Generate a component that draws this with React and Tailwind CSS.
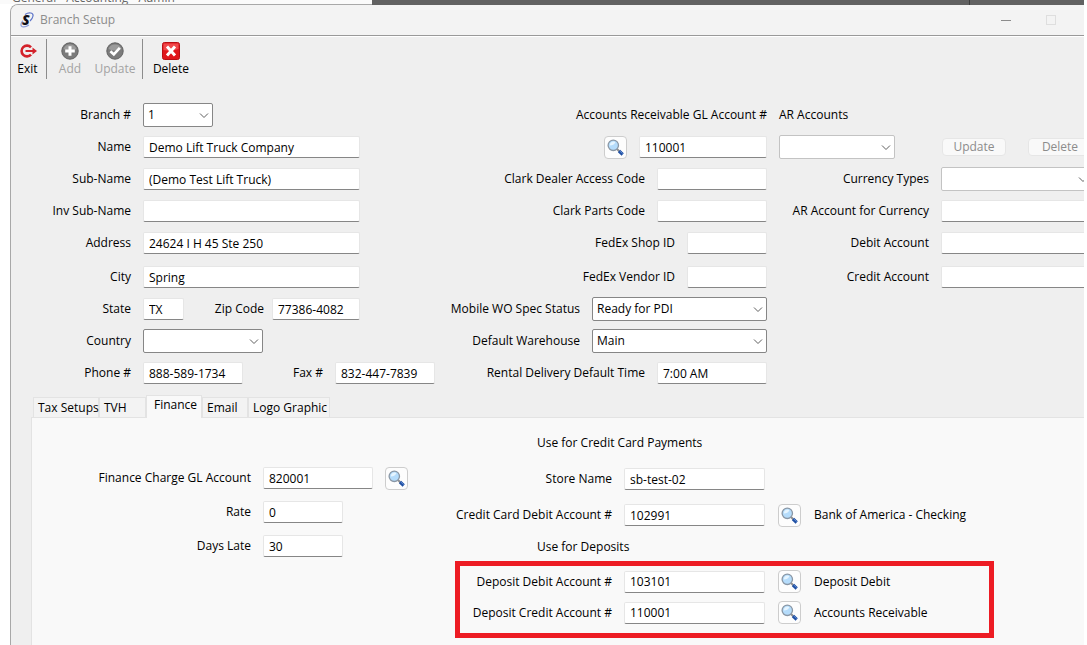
import clsx from 'clsx';

const Chevron = () => (
  <svg
    className="absolute right-1 top-1/2 -translate-y-1/2 pointer-events-none"
    width="10"
    height="10"
    viewBox="0 0 10 10"
    fill="none"
    stroke="#5f5f5f"
  >
    <path d="M1 3.5 L5 7.5 L9 3.5" />
  </svg>
);

const Label = ({ htmlFor, className, children }) => (
  <label htmlFor={htmlFor} className={clsx('flex shrink-0 justify-end whitespace-nowrap', className)}>
    {children}
  </label>
);

const TextBox = ({ id, value = '', className }) => (
  <input
    id={id}
    type="text"
    defaultValue={value}
    className={clsx(
      'h-[22px] shrink-0 rounded-xs border border-[#e6e6e6] border-b-[#868686] bg-white px-[5px] outline-none',
      className
    )}
  />
);

const DropDown = ({ id, value = '', className, muted }) => (
  <div className={clsx('relative shrink-0', className)}>
    <select
      id={id}
      defaultValue={value}
      className={clsx(
        'block h-6 w-full appearance-none rounded-xs border bg-white pl-1 pr-5 outline-none',
        muted ? 'border-[#c3c3c3]' : 'border-[#868686]'
      )}
    >
      <option value={value}>{value}</option>
    </select>
    <Chevron />
  </div>
);

const SearchButton = ({ label }) => (
  <button
    type="button"
    aria-label={label}
    className="flex h-[23px] w-[23px] shrink-0 items-center justify-center rounded border border-[#cdcdcd] bg-[#fdfdfd]"
  >
    <svg width="17" height="17" viewBox="0 0 17 17" fill="none">
      <path d="M10 10 L12.5 12.5" stroke="#8d8d8d" strokeWidth="2" />
      <path d="M12 12 L15.7 15.5" stroke="#1f4fa3" strokeWidth="3.2" />
      <path d="M12.6 11.8 L15.6 14.6" stroke="#6f9be0" strokeWidth="0.8" />
      <circle cx="6.3" cy="6.3" r="5.2" fill="#b5dcfb" stroke="#8a97a5" strokeWidth="1.3" />
      <path d="M2.8 6.4 A3.6 3.6 0 0 1 8.4 3.2 Q6.8 6.4 2.8 6.4" fill="#e6f5ff" />
    </svg>
  </button>
);

const Row = ({ className, children }) => (
  <div className={clsx('flex h-8 items-center gap-3', className)}>{children}</div>
);

const ExitIcon = () => (
  <svg width="20" height="18" viewBox="0 0 20 18" fill="none" stroke="#d3222a">
    <path d="M13 5.4 A5.4 5.4 0 1 0 13 12.6" strokeWidth="2.6" />
    <path d="M7.5 9 H16" strokeWidth="2" />
    <path d="M14.5 5.4 L19 9 L14.5 12.6 Z" fill="#d3222a" stroke="none" />
  </svg>
);

const AddIcon = () => (
  <svg width="18" height="18" viewBox="0 0 18 18">
    <circle cx="9" cy="9" r="8.2" fill="#7b7b7b" stroke="#626262" />
    <path d="M2.5 7 A7 7 0 0 1 15.5 7 Q9 10 2.5 7" fill="#9b9b9b" />
    <path d="M9 4.2 V13.8 M4.2 9 H13.8" stroke="#fff" strokeWidth="3" />
  </svg>
);

const UpdateIcon = () => (
  <svg width="18" height="18" viewBox="0 0 18 18">
    <circle cx="9" cy="9" r="8.2" fill="#7b7b7b" stroke="#626262" />
    <path d="M2.5 7 A7 7 0 0 1 15.5 7 Q9 10 2.5 7" fill="#9b9b9b" />
    <path d="M4.4 9.2 L7.8 12.4 L13.8 5.8" fill="none" stroke="#fff" strokeWidth="2.6" />
  </svg>
);

const DeleteIcon = () => (
  <svg width="18" height="18" viewBox="0 0 18 18">
    <rect x="0.5" y="0.5" width="17" height="17" rx="2" fill="#e0161b" stroke="#b80f14" />
    <path d="M1.5 1.5 H16.5 V7 Q9 10 1.5 8 Z" fill="#f0484a" />
    <path d="M5 4.6 L13 13.4 M13 4.6 L5 13.4" stroke="#fff" strokeWidth="3" />
  </svg>
);

const ToolButton = ({ icon, label, disabled, className }) => (
  <button
    type="button"
    disabled={disabled}
    className={clsx(
      'flex shrink-0 flex-col items-center pt-[3px]',
      disabled ? 'text-[#a3a3a3]' : 'text-black',
      className
    )}
  >
    {icon}
    <span className="leading-[18px]">{label}</span>
  </button>
);

const Logo = () => (
  <svg width="14" height="16" viewBox="0 0 14 16">
    <path d="M5 2.5 C9 0 13.5 0.5 13 4 C12.7 6 11.5 7.5 10 9" fill="none" stroke="#5f76c9" strokeWidth="1.2" />
    <path d="M9 13 C5 15.8 0.5 15.5 1 12 C1.3 10.5 2 9.5 3 8.6" fill="none" stroke="#8ea0dc" strokeWidth="1.2" />
    <text x="2" y="13" fontSize="14" fontWeight="800" fontStyle="italic" fill="#101018">S</text>
  </svg>
);

const tabs = [
  { name: 'Tax Setups', width: 'w-[66px]' },
  { name: 'TVH', width: 'w-[47px]' },
  { name: 'Finance', width: 'w-14' },
  { name: 'Email', width: 'w-[46px]' },
  { name: 'Logo Graphic', width: 'w-[82px]' },
];

const TabBar = ({ active }) => (
  <div role="tablist" className="flex h-[23px] items-end pl-[22px]">
    {tabs.map((tab) => (
      <button
        key={tab.name}
        type="button"
        role="tab"
        aria-selected={tab.name === active}
        className={clsx(
          'shrink-0 whitespace-nowrap border border-b-0 border-[#e3e3e3] text-left',
          tab.width,
          tab.name === active
            ? 'relative -mb-px h-[23px] bg-[#f9f9f9] pl-[7px] pb-1'
            : 'h-5 bg-[#f3f3f3] pl-1'
        )}
      >
        {tab.name}
      </button>
    ))}
  </div>
);

const AddressColumn = () => (
  <div className="flex w-[440px] shrink-0 flex-col gap-0.5">
    <div>
      <Row>
        <Label htmlFor="branch" className="w-30">Branch #</Label>
        <DropDown id="branch" value="1" className="w-[70px]" />
      </Row>
      <Row>
        <Label htmlFor="name" className="w-30">Name</Label>
        <TextBox id="name" value="Demo Lift Truck Company" className="w-[217px]" />
      </Row>
      <Row>
        <Label htmlFor="subname" className="w-30">Sub-Name</Label>
        <TextBox id="subname" value="(Demo Test Lift Truck)" className="w-[217px]" />
      </Row>
      <Row>
        <Label htmlFor="invname" className="w-30">Inv Sub-Name</Label>
        <TextBox id="invname" className="w-[217px]" />
      </Row>
      <Row>
        <Label htmlFor="address" className="w-30">Address</Label>
        <TextBox id="address" value="24624 I H 45 Ste 250" className="w-[217px]" />
      </Row>
    </div>
    <div>
      <Row>
        <Label htmlFor="city" className="w-30">City</Label>
        <TextBox id="city" value="Spring" className="w-[217px]" />
      </Row>
      <Row>
        <Label htmlFor="state" className="w-30">State</Label>
        <TextBox id="state" value="TX" className="w-[41px]" />
        <div className="flex items-center gap-2">
          <Label htmlFor="zip" className="w-[68px]">Zip Code</Label>
          <TextBox id="zip" value="77386-4082" className="w-[88px]" />
        </div>
      </Row>
      <Row>
        <Label htmlFor="country" className="w-30">Country</Label>
        <DropDown id="country" className="w-30" />
      </Row>
      <Row>
        <Label htmlFor="phone" className="w-30">Phone #</Label>
        <TextBox id="phone" value="888-589-1734" className="w-[100px]" />
        <Label htmlFor="fax" className="w-[68px]">Fax #</Label>
        <TextBox id="fax" value="832-447-7839" className="w-[100px]" />
      </Row>
    </div>
  </div>
);

const AccountColumn = () => (
  <div className="flex w-[316px] shrink-0 flex-col gap-0.5">
    <div>
      <Row className="justify-end">
        <Label htmlFor="argl">Accounts Receivable GL Account #</Label>
      </Row>
      <Row className="justify-end">
        <SearchButton label="Find receivable account" />
        <TextBox id="argl" value="110001" className="w-32" />
      </Row>
      <Row className="justify-end">
        <Label htmlFor="clarkdealer">Clark Dealer Access Code</Label>
        <TextBox id="clarkdealer" className="w-[110px]" />
      </Row>
      <Row className="justify-end">
        <Label htmlFor="clarkparts">Clark Parts Code</Label>
        <TextBox id="clarkparts" className="w-[110px]" />
      </Row>
      <Row className="justify-end">
        <Label htmlFor="fedexshop">FedEx Shop ID</Label>
        <TextBox id="fedexshop" className="w-20" />
      </Row>
    </div>
    <div>
      <Row className="justify-end">
        <Label htmlFor="fedexvendor">FedEx Vendor ID</Label>
        <TextBox id="fedexvendor" className="w-20" />
      </Row>
      <Row className="justify-end">
        <Label htmlFor="mobile">Mobile WO Spec Status</Label>
        <DropDown id="mobile" value="Ready for PDI" className="w-[175px]" />
      </Row>
      <Row className="justify-end">
        <Label htmlFor="warehouse">Default Warehouse</Label>
        <DropDown id="warehouse" value="Main" className="w-[175px]" />
      </Row>
      <Row className="justify-end">
        <Label htmlFor="rental">Rental Delivery Default Time</Label>
        <TextBox id="rental" value="7:00 AM" className="w-[110px]" />
      </Row>
    </div>
  </div>
);

const smallButton =
  'h-[18px] w-16 shrink-0 rounded border border-[#e6e6e6] bg-[#f9f9f9] text-[#8c8c8c] leading-4';

const CurrencyColumn = () => (
  <div className="flex min-w-0 flex-1 flex-col gap-0.5 overflow-hidden pl-3">
    <div>
      <Row>
        <Label htmlFor="araccounts">AR Accounts</Label>
      </Row>
      <Row>
        <DropDown id="araccounts" muted className="w-[116px]" />
        <div className="flex gap-[22px] pl-[35px]">
          <button type="button" disabled className={smallButton}>Update</button>
          <button type="button" disabled className={smallButton}>Delete</button>
        </div>
      </Row>
      <Row>
        <Label htmlFor="currency" className="w-[150px]">Currency Types</Label>
        <DropDown id="currency" muted className="w-[151px]" />
      </Row>
      <Row>
        <Label htmlFor="arcurrency" className="w-[150px]">AR Account for Currency</Label>
        <TextBox id="arcurrency" className="w-[151px]" />
      </Row>
      <Row>
        <Label htmlFor="debit" className="w-[150px]">Debit Account</Label>
        <TextBox id="debit" className="w-[151px]" />
      </Row>
    </div>
    <Row>
      <Label htmlFor="credit" className="w-[150px]">Credit Account</Label>
      <TextBox id="credit" className="w-[151px]" />
    </Row>
  </div>
);

const AccountLookup = ({ id, label, value, account, className }) => (
  <div className={clsx('flex items-center', className)}>
    <Label htmlFor={id} className="w-[152px]">{label}</Label>
    <TextBox id={id} value={value} className="ml-3 w-[141px]" />
    {account && (
      <div className="ml-[13px] flex items-center gap-[13px]">
        <SearchButton label={`Find ${label}`} />
        <span className="whitespace-nowrap">{account}</span>
      </div>
    )}
  </div>
);

const FinancePanel = () => (
  <div
    role="tabpanel"
    className="ml-5 flex flex-1 overflow-hidden border-l border-t border-[#e3e3e3] bg-[#f9f9f9] pt-[7px]"
  >
    <div className="w-[423px] shrink-0 pt-9">
      <div className="flex h-[34px] items-center gap-3">
        <Label htmlFor="financegl" className="w-[219px]">Finance Charge GL Account</Label>
        <TextBox id="financegl" value="820001" className="w-[110px]" />
        <SearchButton label="Find finance charge account" />
      </div>
      <div className="flex h-[34px] items-center gap-3">
        <Label htmlFor="rate" className="w-[219px]">Rate</Label>
        <TextBox id="rate" value="0" className="w-20" />
      </div>
      <div className="flex h-[34px] items-center gap-3">
        <Label htmlFor="dayslate" className="w-[219px]">Days Late</Label>
        <TextBox id="dayslate" value="30" className="w-20" />
      </div>
    </div>
    <div className="w-[539px] shrink-0">
      <h2 className="flex h-9 items-center pl-[82px]">Use for Credit Card Payments</h2>
      <AccountLookup id="store" label="Store Name" value="sb-test-02" className="h-9 px-[5px]" />
      <AccountLookup
        id="ccdebit"
        label="Credit Card Debit Account #"
        value="102991"
        account="Bank of America - Checking"
        className="h-9 px-[5px]"
      />
      <h2 className="flex h-7 items-center pl-[82px]">Use for Deposits</h2>
      <div className="border-[5px] border-[#ed1c24] pb-[5px]">
        <AccountLookup
          id="depdebit"
          label="Deposit Debit Account #"
          value="103101"
          account="Deposit Debit"
          className="h-[31px]"
        />
        <AccountLookup
          id="depcredit"
          label="Deposit Credit Account #"
          value="110001"
          account="Accounts Receivable"
          className="h-[31px]"
        />
      </div>
    </div>
  </div>
);

const App = () => {
  return (
    <div className="flex min-h-screen flex-col overflow-hidden bg-white pr-[3px] font-['Open_Sans','Noto_Sans',sans-serif] text-[12px] leading-4 text-black">
      <div className="flex h-1">
        <nav className="h-1 w-[372px] shrink-0 overflow-hidden bg-[#fafafa] pl-3 text-[#666]">
          <div className="-mt-[10px] flex gap-2.5">
            <a href="#general">General</a>
            <a href="#accounting">Accounting</a>
            <a href="#admin">Admin</a>
          </div>
        </nav>
        <div className="relative z-10 flex h-[5px] flex-1 bg-[#616161]">
          <div className="flex-1 border-r border-[#3c3c3c]" />
          <div className="w-[114px]" />
        </div>
      </div>

      <div className="ml-2.5 flex flex-1 flex-col overflow-hidden rounded-tl-lg border-l border-t border-[#a8a8a8] bg-[#efefef]">
        <header className="flex h-[31px] items-center border-b border-[#999] bg-[#f3f3f3] pl-[9px] pr-7">
          <Logo />
          <h1 className="ml-1.5 flex-1 text-[#8c8c8c]">Branch Setup</h1>
          <button type="button" aria-label="Minimize" className="flex h-5 w-2.5 items-center">
            <span className="h-px w-full bg-[#8c8c8c]" />
          </button>
          <button type="button" aria-label="Maximize" className="ml-[35px] h-2.5 w-2.5 border border-[#dedede]" />
        </header>

        <div className="flex h-11 items-start border-t border-white pt-[2px]">
          <ToolButton icon={<ExitIcon />} label="Exit" className="w-[33px]" />
          <span className="mx-0.5 h-10 w-px bg-[#8c8c8c]" />
          <ToolButton icon={<AddIcon />} label="Add" disabled className="w-[42px]" />
          <ToolButton icon={<UpdateIcon />} label="Update" disabled className="w-12" />
          <span className="ml-[3px] mr-2 h-10 w-px bg-[#8c8c8c]" />
          <ToolButton icon={<DeleteIcon />} label="Delete" className="w-10" />
        </div>

        <main className="flex flex-1 flex-col pt-[19px]">
          <div className="flex pb-[5px]">
            <AddressColumn />
            <AccountColumn />
            <CurrencyColumn />
          </div>
          <TabBar active="Finance" />
          <FinancePanel />
        </main>
      </div>
    </div>
  );
};

export default App;
